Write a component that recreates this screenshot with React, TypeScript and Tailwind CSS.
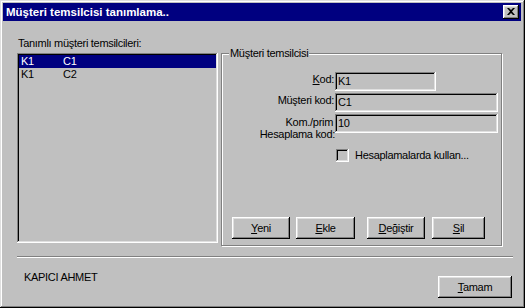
// Müşteri temsilcisi tanımlama — classic dialog
const raised =
  'shadow-[inset_-1px_-1px_#000,inset_1px_1px_#fff,inset_-2px_-2px_#808080,inset_2px_2px_#dfdfdf]'

function Btn({ mn, rest, className }: { mn: string; rest: string; className: string }) {
  return (
    <button
      className={`flex h-[22px] items-center justify-center bg-[#c0c0c0] text-black ${raised} ${className}`}
    >
      <span>
        <span className="underline underline-offset-[1px]">{mn}</span>
        {rest}
      </span>
    </button>
  )
}

function Field({ value, w }: { value: string; w: string }) {
  return (
    <div
      className={`flex h-[19px] items-center bg-[#c0c0c0] pl-[3px] shadow-[inset_-1px_-1px_#fff,inset_1px_1px_#808080,inset_-2px_-2px_#dfdfdf,inset_2px_2px_#000] ${w}`}
    >
      {value}
    </div>
  )
}

export default function App() {
  return (
    <div className="flex h-[308px] w-[525px] flex-col bg-[#c0c0c0] p-[3px] font-['Liberation_Sans',Arial,sans-serif] text-[11px] leading-[13px] tracking-[-0.3px] text-black shadow-[inset_-1px_-1px_#000,inset_1px_1px_#dfdfdf,inset_-2px_-2px_#808080,inset_2px_2px_#fff]">
      {/* ---- başlık ---- */}
      <div className="mr-[1px] flex h-[18px] items-center justify-between bg-[#000080] pl-[3px] pr-[2px]">
        <span className="text-[11.5px] font-bold tracking-normal text-white">Müşteri temsilcisi tanımlama..</span>
        <div className={`flex h-[14px] w-[16px] items-center justify-center bg-[#c0c0c0] ${raised}`}>
          <svg width="8" height="7" viewBox="0 0 8 7" className="mb-[1px]">
            <path d="M0 0h2l2 2 2-2h2L5 3.5 8 7H6L4 5 2 7H0l3-3.5z" fill="#000" />
          </svg>
        </div>
      </div>

      {/* ---- gövde ---- */}
      <div className="flex flex-1 flex-col pl-[14px]">
        <div className="flex gap-[3px] pt-[16px]">
          {/* liste */}
          <div className="w-[201px]">
            <div className="h-[13px] pl-[1px]">Tanımlı müşteri temsilcileri:</div>
            <div className="mt-[3px] h-[190px] bg-[#c0c0c0] p-[2px] shadow-[inset_-1px_-1px_#fff,inset_1px_1px_#808080,inset_-2px_-2px_#dfdfdf,inset_2px_2px_#000]">
              <div className="flex h-[13px] items-center bg-[#000080] pl-[2px] text-white">
                <span className="w-[42px]">K1</span>
                <span>C1</span>
              </div>
              <div className="flex h-[13px] items-center pl-[2px]">
                <span className="w-[42px]">K1</span>
                <span>C2</span>
              </div>
            </div>
          </div>

          {/* grup kutusu */}
          <div className="relative mt-[16px] flex h-[193px] w-[281px] flex-col border border-[#808080] shadow-[inset_1px_1px_#fff,1px_1px_#fff]">
            <span className="absolute -top-[7px] left-[7px] bg-[#c0c0c0] px-[1px]">Müşteri temsilcisi</span>

            <div className="flex flex-col gap-[2px] pt-[18px]">
              <div className="flex items-start">
                <div className="w-[113px] pr-[1px] pt-[1px] text-right">
                  <span className="underline underline-offset-[1px]">K</span>od:
                </div>
                <Field value="K1" w="w-[101px]" />
              </div>
              <div className="flex items-start">
                <div className="w-[113px] pr-[1px] pt-[1px] text-right">Müşteri kod:</div>
                <Field value="C1" w="w-[163px]" />
              </div>
              <div className="flex items-start">
                <div className="w-[113px] pt-[2px] text-right leading-[12px]">
                  <div className="pr-[2px]">Kom./prim</div>
                  <div>Hesaplama kod:</div>
                </div>
                <Field value="10" w="w-[163px]" />
              </div>
            </div>

            <div className="mt-[9px] flex items-center gap-[6px] pl-[114px]">
              <div className="h-[13px] w-[13px] bg-[#c0c0c0] shadow-[inset_-1px_-1px_#fff,inset_1px_1px_#808080,inset_-2px_-2px_#dfdfdf,inset_2px_2px_#000]" />
              <span>Hesaplamalarda kullan...</span>
            </div>

            <div className="mt-auto flex pb-[6px] pl-[10px]">
              <Btn mn="Y" rest="eni" className="w-[58px]" />
              <Btn mn="E" rest="kle" className="ml-[6px] w-[59px]" />
              <Btn mn="D" rest="eğiştir" className="ml-[12px] w-[58px]" />
              <Btn mn="S" rest="il" className="ml-[7px] w-[53px]" />
            </div>
          </div>
        </div>

        {/* ayraç */}
        <div className="mt-[10px] h-[2px] w-[496px] border-t border-b border-t-[#808080] border-b-white" />

        {/* alt kısım */}
        <div className="mt-[13px] flex w-[496px] items-start justify-between">
          <span className="pl-[7px]">KAPICI AHMET</span>
          <Btn mn="T" rest="amam" className="mr-[1px] mt-[5px] w-[74px]" />
        </div>
      </div>
    </div>
  )
}
